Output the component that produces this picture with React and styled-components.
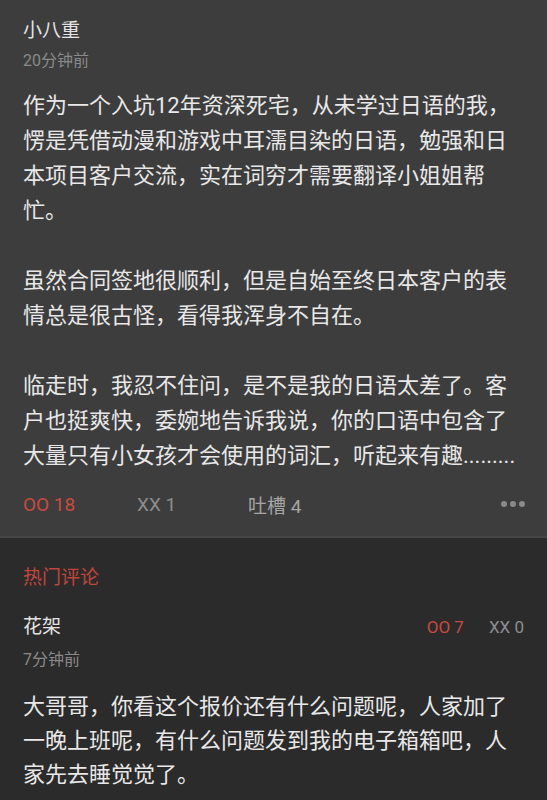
import React from "react";
import styled, { createGlobalStyle } from "styled-components";

const Global = createGlobalStyle`
  html, body { margin: 0; padding: 0; background: #2b2b2b; }
  body { font-family: Roboto, "Noto Sans CJK SC", "Noto Sans", sans-serif; }
`;

const Page = styled.div`
  width: 547px;
  height: 800px;
  overflow: hidden;
  display: flex;
  flex-direction: column;
  background: #2b2b2b;
`;

const Post = styled.section`
  background: #3d3d3d;
  padding: 19px 22px 0 23px;
  border-bottom: 2px solid #474747;
`;

const Name = styled.div`
  font-size: 19px;
  line-height: 24px;
  color: #e4e4e4;
`;

const Time = styled.div`
  margin-top: ${(p) => p.$top || 8}px;
  font-size: 16px;
  line-height: 20px;
  color: #8a8a8a;
`;

const Body = styled.div`
  margin-top: ${(p) => p.$top}px;
  font-size: 22px;
  line-height: ${(p) => p.$lh}px;
  color: #e8e8e8;
`;

const Para = styled.p`
  margin: 0 0 ${(p) => p.$gap}px;
  &:last-child { margin-bottom: 0; }
`;

const Actions = styled.div`
  display: flex;
  align-items: center;
  height: 42px;
  margin-top: 10px;
  padding-bottom: 11px;
  font-size: 19px;
`;

const Action = styled.span`
  color: ${(p) => (p.$red ? "#c94a40" : p.$light ? "#a5a5a5" : "#8e8e8e")};
  width: ${(p) => p.$w}px;
  flex: none;
`;

const More = styled.div`
  margin-left: auto;
  display: flex;
  gap: 3px;
`;

const Dot = styled.span`
  width: 6px;
  height: 6px;
  border-radius: 50%;
  background: #8a8a8a;
`;

const Comments = styled.section`
  padding: 28px 22px 0 23px;
`;

const SectionTitle = styled.div`
  font-size: 19px;
  line-height: 24px;
  color: #c0463c;
`;

const CommentHead = styled.div`
  display: flex;
  align-items: center;
  margin-top: 25px;
`;

const CommentName = styled(Name)`
  flex: 1;
`;

const Votes = styled.div`
  display: flex;
  gap: 25px;
  font-size: 17px;
  margin-right: 1px;
`;

const Vote = styled.span`
  color: ${(p) => (p.$red ? "#c94a40" : "#8e8e8e")};
`;

export default function App() {
  return (
    <>
      <Global />
      <Page>
        <Post>
          <Name>小八重</Name>
          <Time>20分钟前</Time>
          <Body $top={17} $lh={35}>
            <Para $gap={35}>
              作为一个入坑12年资深死宅，从未学过日语的我，愣是凭借动漫和游戏中耳濡目染的日语，勉强和日本项目客户交流，实在词穷才需要翻译小姐姐帮忙。
            </Para>
            <Para $gap={35}>
              虽然合同签地很顺利，但是自始至终日本客户的表情总是很古怪，看得我浑身不自在。
            </Para>
            <Para $gap={35}>
              临走时，我忍不住问，是不是我的日语太差了。客户也挺爽快，委婉地告诉我说，你的口语中包含了大量只有小女孩才会使用的词汇，听起来有趣.........
            </Para>
          </Body>
          <Actions>
            <Action $red $w={114}>OO 18</Action>
            <Action $w={111}>XX 1</Action>
            <Action $light>吐槽 4</Action>
            <More>
              <Dot />
              <Dot />
              <Dot />
            </More>
          </Actions>
        </Post>
        <Comments>
          <SectionTitle>热门评论</SectionTitle>
          <CommentHead>
            <CommentName>花架</CommentName>
            <Votes>
              <Vote $red>OO 7</Vote>
              <Vote>XX 0</Vote>
            </Votes>
          </CommentHead>
          <Time $top={11}>7分钟前</Time>
          <Body $top={20} $lh={34}>
            <Para $gap={0}>
              大哥哥，你看这个报价还有什么问题呢，人家加了一晚上班呢，有什么问题发到我的电子箱箱吧，人家先去睡觉觉了。
            </Para>
          </Body>
        </Comments>
      </Page>
    </>
  );
}
